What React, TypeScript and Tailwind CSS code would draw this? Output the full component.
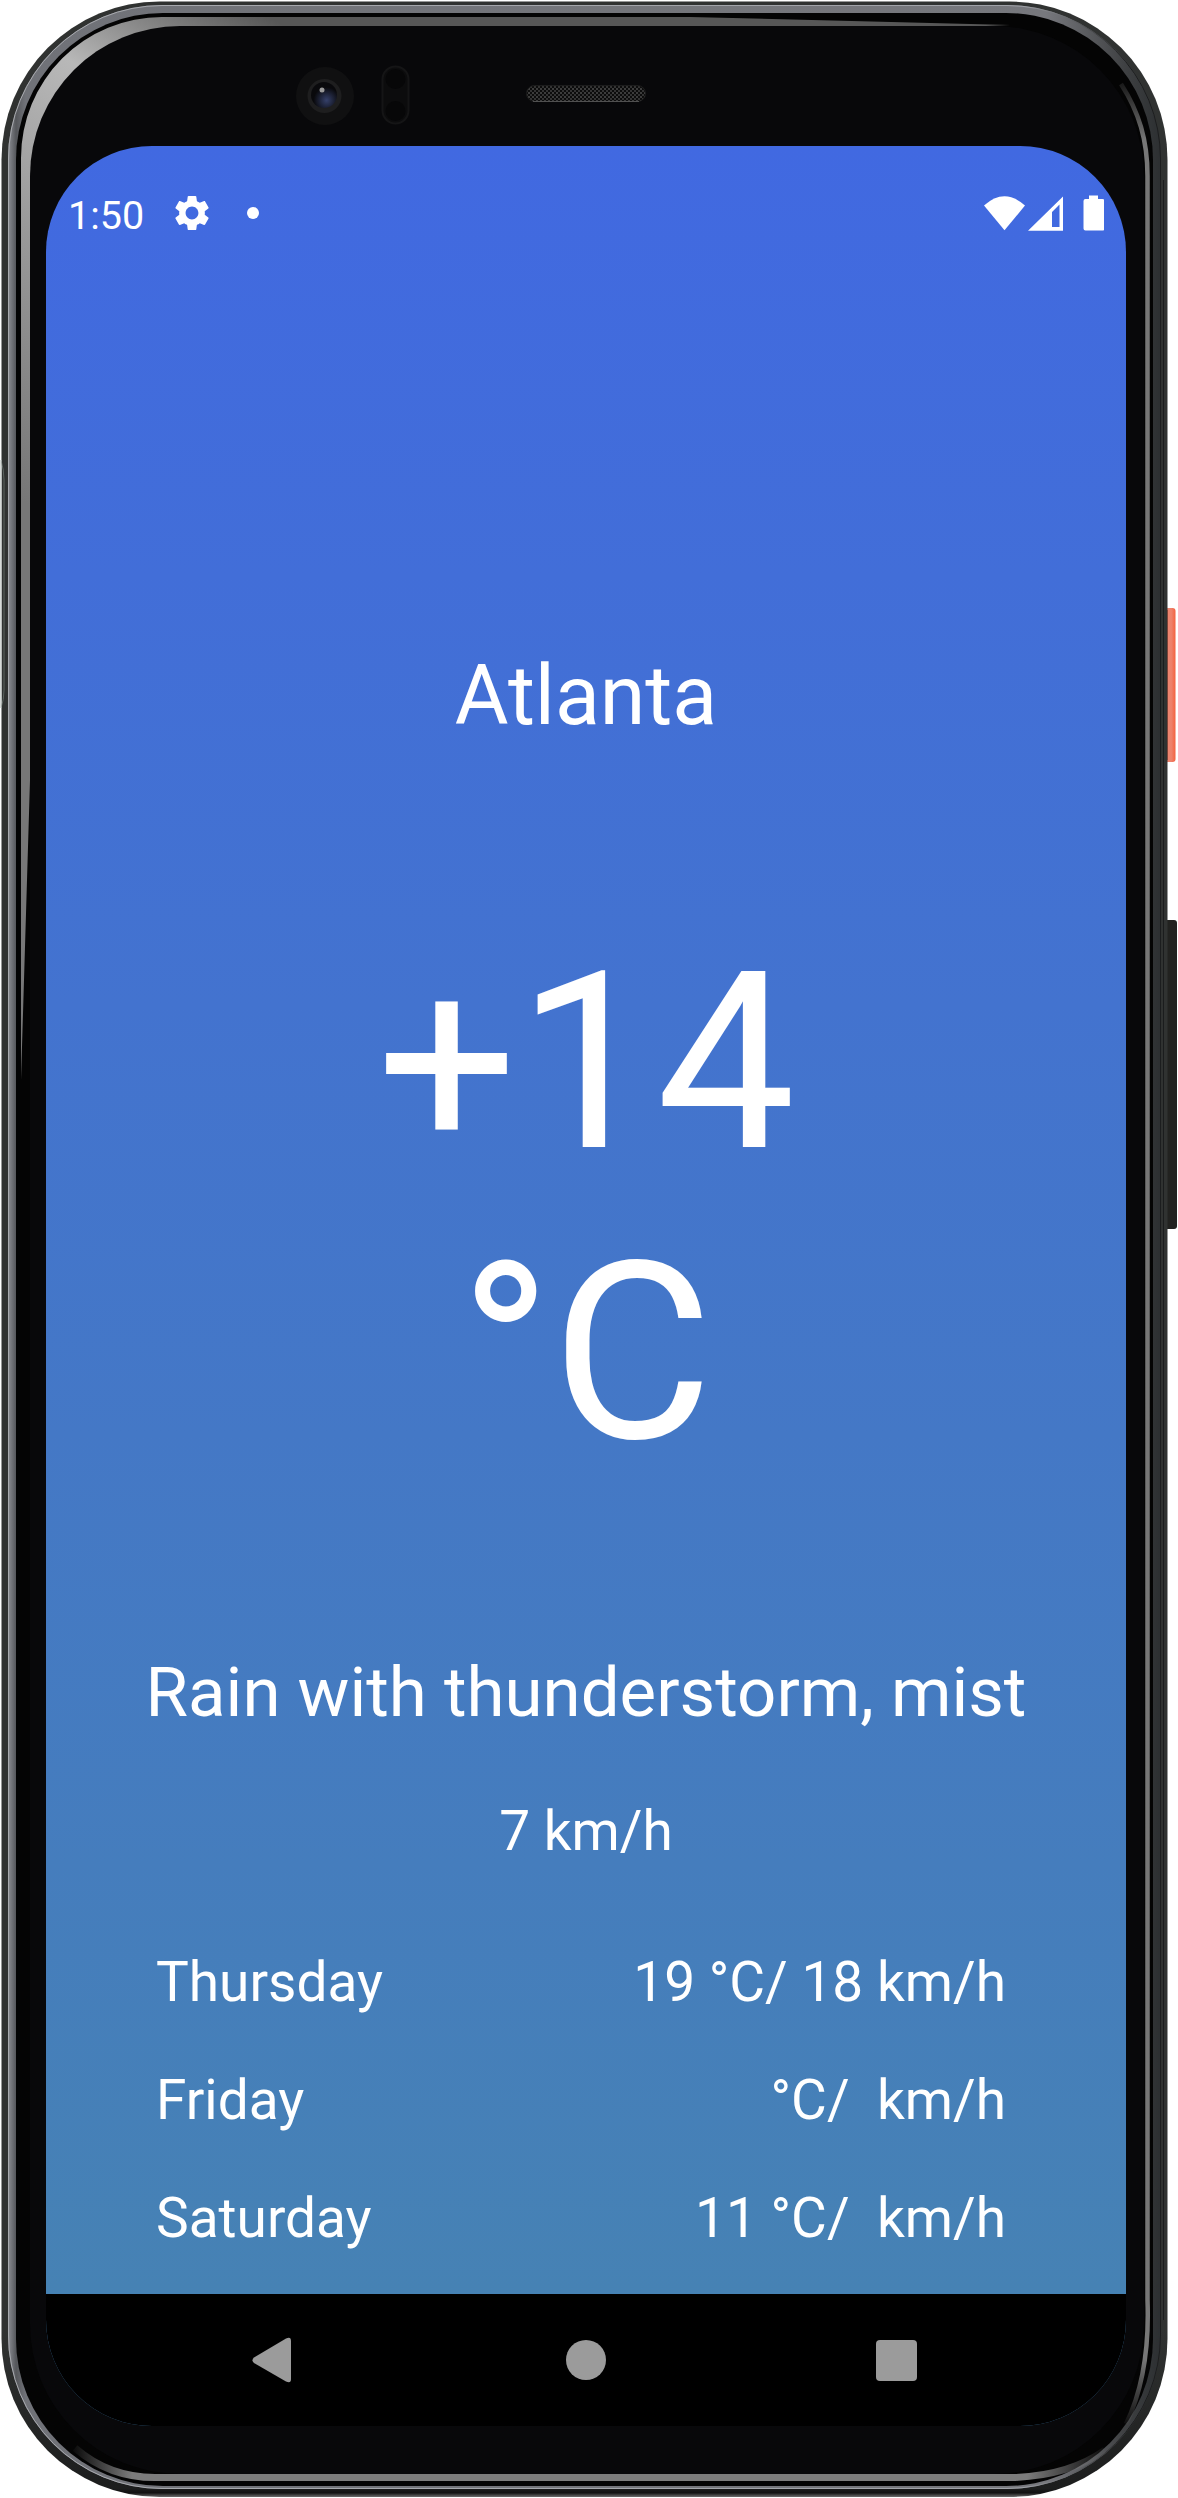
import React from "react";

const forecast = [
  { day: "Thursday", value: "19 °C/ 18 km/h" },
  { day: "Friday", value: "°C/  km/h" },
  { day: "Saturday", value: "11 °C/  km/h" },
];

function DeviceShell() {
  return (
    <svg className="absolute inset-0" width="1178" height="2498" viewBox="0 0 1178 2498" aria-hidden="true">
      <defs>
        <linearGradient id="hull" gradientUnits="userSpaceOnUse" x1="0" y1="2330" x2="0" y2="2497">
          <stop offset="0" stopColor="#303231" />
          <stop offset="0.95" stopColor="#1c1d1d" />
          <stop offset="0.975" stopColor="#111" />
          <stop offset="1" stopColor="#6d6d6d" />
        </linearGradient>
        <linearGradient id="ring" gradientUnits="userSpaceOnUse" x1="8" y1="0" x2="1161" y2="0">
          <stop offset="0" stopColor="#8c8e94" />
          <stop offset="0.007" stopColor="#55575b" />
          <stop offset="0.015" stopColor="#707278" />
          <stop offset="0.9" stopColor="#77787d" />
          <stop offset="0.97" stopColor="#3e4042" />
          <stop offset="1" stopColor="#2c2f31" />
        </linearGradient>
        <linearGradient id="ringEdge" gradientUnits="userSpaceOnUse" x1="8" y1="0" x2="1161" y2="0">
          <stop offset="0" stopColor="#a8aaaf" />
          <stop offset="0.88" stopColor="#a0a2a8" />
          <stop offset="0.97" stopColor="#1c1d1e" />
          <stop offset="1" stopColor="#1c1d1e" />
        </linearGradient>
        <linearGradient id="glint" gradientUnits="userSpaceOnUse" x1="20" y1="500" x2="320" y2="0">
          <stop offset="0" stopColor="#777" />
          <stop offset="0.4" stopColor="#999" />
          <stop offset="0.69" stopColor="#b8b8b8" />
          <stop offset="0.8" stopColor="#8a8a8a" />
          <stop offset="0.93" stopColor="#575757" />
        </linearGradient>
        <linearGradient id="glintRight" gradientUnits="userSpaceOnUse" x1="0" y1="70" x2="0" y2="2430">
          <stop offset="0" stopColor="#777" stopOpacity="0" />
          <stop offset="0.03" stopColor="#777" />
          <stop offset="0.97" stopColor="#777" />
          <stop offset="1" stopColor="#777" stopOpacity="0" />
        </linearGradient>
        <linearGradient id="glintBottom" gradientUnits="userSpaceOnUse" x1="70" y1="0" x2="1110" y2="0">
          <stop offset="0" stopColor="#7c7c7c" stopOpacity="0" />
          <stop offset="0.06" stopColor="#7c7c7c" />
          <stop offset="0.92" stopColor="#7c7c7c" />
          <stop offset="1" stopColor="#7c7c7c" stopOpacity="0" />
        </linearGradient>
        <linearGradient id="red" x1="0" x2="1">
          <stop offset="0" stopColor="#c9553f" />
          <stop offset="0.35" stopColor="#ee8a76" />
          <stop offset="0.75" stopColor="#ee8069" />
          <stop offset="1" stopColor="#f4623f" />
        </linearGradient>
        <radialGradient id="lens" cx="0.6" cy="0.7" r="0.5">
          <stop offset="0" stopColor="#35406a" />
          <stop offset="1" stopColor="#09090c" />
        </radialGradient>
        <pattern id="mesh" width="4" height="4" patternUnits="userSpaceOnUse">
          <rect width="4" height="4" fill="#0c0c0c" />
          <rect width="2" height="2" fill="#3c3c3c" />
          <rect x="2" y="2" width="2" height="2" fill="#333" />
        </pattern>
      </defs>
      <rect x="1160" y="608" width="15.500" height="154" rx="3" fill="url(#red)" />
      <path d="M1167.500 610V760" stroke="#c9553f" strokeWidth="1" />
      <rect x="1160" y="920" width="17" height="309" rx="3" fill="#222220" />
      <rect x="1.500" y="1.500" width="1166" height="2495.500" rx="158" fill="url(#hull)" />
      <path d="M1 460Q4 470 4 480V690Q4 700 1 708" fill="none" stroke="#5c6460" />
      <path d="M0 460V708" stroke="#d6dad8" strokeWidth="3" />
      <rect x="8" y="5" width="1153" height="2484" rx="154" fill="url(#ring)" />
      <rect x="8.500" y="5.500" width="1152" height="2483" rx="153.500" fill="none" stroke="url(#ringEdge)" />
      <rect x="16" y="13" width="1137" height="2473" rx="147" fill="#040404" />
      <path d="M1163.500 180V2320" stroke="#1b1c1d" strokeWidth="1" />
      <path d="M21 1080V158A141 141 0 0 1 162 17H690L1010 25L170 60L60 170L30 780Z" fill="url(#glint)" />
      <path d="M1121 84C1139 112 1147.500 140 1147.500 176V2300C1149 2340 1145 2385 1126 2424" fill="none" stroke="url(#glintRight)" strokeWidth="4.500" />
      <path d="M75 2448C98 2468 124 2477.500 155 2477.500H1015C1050 2476 1080 2468 1105 2450" fill="none" stroke="url(#glintBottom)" strokeWidth="7" />
      <rect x="30" y="26" width="1114" height="2448" rx="150" fill="#08080a" />
      <circle cx="325" cy="96" r="29" fill="#101011" />
      <circle cx="324.500" cy="96" r="17" fill="#1e1e1f" />
      <circle cx="324" cy="95" r="13" fill="url(#lens)" />
      <circle cx="322" cy="90" r="2.500" fill="#999" />
      <rect x="382.500" y="66.500" width="26" height="57" rx="13" fill="#0c0c0d" stroke="#151516" strokeWidth="2" />
      <circle cx="395.500" cy="79" r="10" fill="#070708" />
      <circle cx="395.500" cy="111" r="10" fill="#070708" />
      <rect x="526.500" y="85.500" width="119" height="16" rx="8" fill="url(#mesh)" stroke="#1c1c1c" />
      <path d="M533 101.500H639" stroke="#505050" />
    </svg>
  );
}

function StatusBar() {
  return (
    <div className="flex h-[134px] shrink-0 items-center text-white">
      <span className="mt-1.5 ml-[22px] w-[76px] text-[39.500px] leading-none">1:50</span>
      <svg className="ml-[30px]" width="36" height="36" viewBox="1.9 1.9 20.2 20.2" fill="currentColor">
        <path d="M19.140 12.940c.04-.3.06-.61.06-.94 0-.32-.02-.64-.07-.94l2.030-1.580c.18-.14.23-.41.12-.61l-1.920-3.320c-.12-.22-.37-.29-.59-.22l-2.390.96c-.5-.38-1.030-.7-1.620-.94l-.36-2.540c-.04-.24-.24-.41-.48-.41h-3.840c-.24 0-.43.17-.47.41l-.36 2.540c-.59.24-1.130.57-1.620.94l-2.390-.96c-.22-.08-.47 0-.59.22L2.740 8.870c-.12.21-.08.47.12.61l2.030 1.580c-.05.3-.09.63-.09.94s.02.64.07.94l-2.030 1.580c-.18.14-.23.41-.12.61l1.920 3.320c.12.22.37.29.59.22l2.390-.96c.5.38 1.030.7 1.620.94l.36 2.540c.05.24.24.41.48.41h3.840c.24 0 .44-.17.47-.41l.36-2.540c.59-.24 1.130-.56 1.620-.94l2.390.96c.22.08.47 0 .59-.22l1.920-3.320c.12-.22.07-.47-.12-.61l-2.010-1.580zM12 15.600c-1.980 0-3.600-1.620-3.600-3.600s1.620-3.600 3.600-3.600 3.600 1.620 3.600 3.600-1.620 3.600-3.600 3.600z" />
      </svg>
      <span className="ml-[37px] size-3 rounded-full bg-white" />
      <svg className="mr-[22px] ml-auto" width="120" height="36" viewBox="0 0 120 36" fill="currentColor">
        <path d="M0 10.500Q20.500 -8 41 10.500L20.500 35.300Z" />
        <path fillRule="evenodd" d="M44 35.700 79 1.500V35.700ZM68 17V32H75.500V9.500Z" />
        <path d="M105 0.500h9v3.500h4.500q2 0 2 2v27.500q0 2-2 2h-17q-2 0-2-2V6q0-2 2-2h3.500Z" />
      </svg>
    </div>
  );
}

function NavBar() {
  return (
    <div className="flex h-[132px] shrink-0 items-center bg-black text-[#9b9b9b]">
      <svg className="ml-[206px]" width="40" height="46" viewBox="0 0 40 46" fill="currentColor">
        <path d="M34 1.500Q39 -1 39 4V42Q39 47 34 44.500L2 26Q-1 23 2 20.500Z" />
      </svg>
      <span className="ml-[274px] size-10 rounded-full bg-current" />
      <span className="ml-[270px] size-[41px] rounded-[4px] bg-current" />
    </div>
  );
}

export default function App() {
  return (
    <div className="relative h-[2498px] w-[1178px] overflow-hidden bg-white font-['Roboto',sans-serif]">
      <DeviceShell />
      <div className="relative pt-[146px] pl-[46px]">
        <main className="flex h-[2280px] w-[1080px] flex-col overflow-hidden rounded-[106px] bg-linear-to-b/srgb from-[#4169e1] to-[#4682b4] to-[94.2%] text-white">
          <StatusBar />
          <div className="flex flex-1 flex-col items-center text-center">
            <h1 className="mt-[367px] text-[82.5px] leading-[97px]">Atlanta</h1>
            <div className="mt-[173px] w-[500px] text-[247.5px] leading-[291px]">+14 °C</div>
            <p className="mt-[154px] text-[69px] leading-[80px] whitespace-nowrap">Rain with thunderstorm, mist</p>
            <p className="mt-[66px] text-[55px] leading-[64px]">7 km/h</p>
            <ul className="mt-[87px] ml-[110px] flex w-[850px] flex-col gap-[54px] self-start text-[55px] leading-[64px]">
              {forecast.map((f) => (
                <li key={f.day} className="flex justify-between">
                  <span>{f.day}</span>
                  <span className="whitespace-pre">{f.value}</span>
                </li>
              ))}
            </ul>
          </div>
          <NavBar />
        </main>
      </div>
    </div>
  );
}
